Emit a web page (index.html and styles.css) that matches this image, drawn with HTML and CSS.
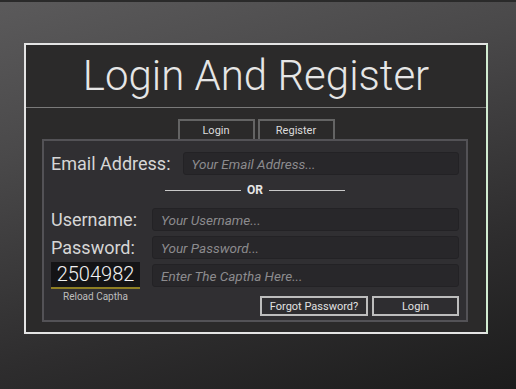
FILE: index.html
```html
<!DOCTYPE html>
<html lang="en">
  <head>
    <meta charset="UTF-8" />
    <meta name="viewport" content="width=device-width, initial-scale=1.0" />
    <title>Login And Register</title>
    <link rel="stylesheet" href="styles.css">
  </head>
  <body>
    <div class="panel">
      <h1 class="title">Login And Register</h1>
      <div class="tabs">
        <button class="tab">Login</button>
        <button class="tab">Register</button>
      </div>
      <form class="box">
        <div class="email_row">
          <label class="label">Email Address:</label>
          <input class="field" type="text" placeholder="Your Email Address..." />
        </div>
        <div class="or">
          <span class="or_line"></span>
          <span class="or_text">OR</span>
          <span class="or_line"></span>
        </div>
        <div class="grid">
          <label class="label">Username:</label>
          <input class="field" type="text" placeholder="Your Username..." />
          <label class="label">Password:</label>
          <input class="field" type="password" placeholder="Your Password..." />
          <div class="captcha">2504982</div>
          <input class="field field_captcha" type="text" placeholder="Enter The Captha Here..." />
          <div class="reload">Reload Captha</div>
          <div class="actions">
            <button class="btn btn_forgot" type="button">Forgot Password?</button>
            <button class="btn btn_login" type="button">Login</button>
          </div>
        </div>
      </form>
    </div>
  </body>
</html>
```

FILE: styles.css
```css
html,
body {
  height: 100%;
}
body {
  margin: 0;
  padding-top: 41px;
  box-sizing: border-box;
  font-family: "Roboto", "Liberation Sans", sans-serif;
  background: linear-gradient(165deg, #5b5a5b 0%, #4a494a 30%, #2e2d2e 70%, #1c1c1c 100%);
  border-top: 2px solid #2a2a2a;
}
.panel {
  width: 460px;
  margin: 0 0 0 24px;
  background-color: #2b2a2a;
  border: 2px solid #e4e4e4;
  border-right-color: #d2ecd2;
  padding-bottom: 10px;
}
.title {
  margin: 0;
  height: 62px;
  line-height: 62px;
  text-align: center;
  font-size: 42px;
  font-weight: 300;
  color: #e6e6e6;
  border-bottom: 1px solid #7a7a7a;
}
.tabs {
  display: flex;
  justify-content: center;
  gap: 3px;
  margin-top: 11px;
}
.tab {
  width: 77px;
  height: 20px;
  padding: 0;
  font-family: inherit;
  font-size: 11px;
  color: #dcdcdc;
  background-color: #2b2a2a;
  border: 2px solid #646464;
  border-bottom: none;
}
.box {
  margin: 0 18px 0 16px;
  padding: 11px 7px 4px 7px;
  background-color: #302f32;
  border: 2px solid #535256;
}
.label {
  font-size: 18px;
  color: #d6d6d6;
  white-space: nowrap;
}
.field {
  height: 23px;
  box-sizing: border-box;
  padding: 0 8px;
  font-family: inherit;
  font-size: 13.5px;
  color: #ddd;
  background-color: #28272a;
  border: 1px solid #232225;
  border-radius: 3px;
}
.field::placeholder {
  font-style: italic;
  color: #8c8b8e;
}
.email_row {
  display: flex;
  align-items: center;
  gap: 12px;
}
.email_row .field {
  flex: 1;
}
.or {
  display: flex;
  align-items: center;
  justify-content: center;
  gap: 6px;
  height: 30px;
  margin: 0 0 3px 0;
}
.or_line {
  width: 76px;
  height: 1px;
  background-color: #c8c8c8;
}
.or_text {
  font-size: 12px;
  font-weight: 700;
  color: #e6e6e6;
}
.grid {
  display: grid;
  grid-template-columns: 89px 1fr;
  column-gap: 12px;
  row-gap: 5px;
  align-items: center;
}
.captcha {
  height: 25px;
  margin-top: -2px;
  line-height: 25px;
  text-align: center;
  font-size: 20px;
  font-weight: 300;
  color: #f2f2f2;
  background-color: #141416;
  border-bottom: 2px solid #8e7f24;
}
.field_captcha {
  align-self: start;
}
.reload {
  align-self: start;
  margin-top: -3px;
  text-align: center;
  font-size: 10px;
  color: #bdbdbd;
}
.actions {
  display: flex;
  justify-content: flex-end;
  gap: 4px;
  margin-top: 2px;
}
.btn {
  height: 20px;
  padding: 0;
  font-family: inherit;
  font-size: 11px;
  color: #e2e2e2;
  background-color: #2e2d30;
  border: 2px solid #bdbdbd;
}
.btn_forgot {
  width: 108px;
}
.btn_login {
  width: 87px;
}
```
